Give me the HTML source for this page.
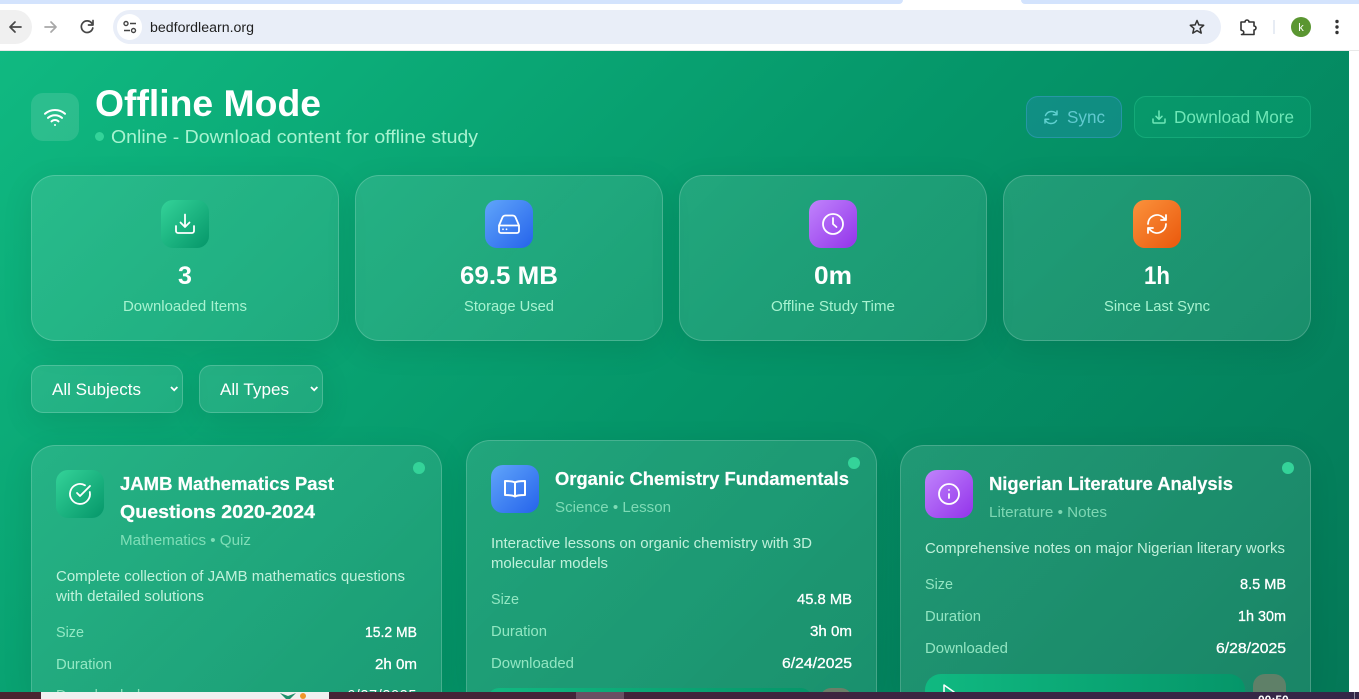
<!DOCTYPE html>
<html lang="en"><head><meta charset="utf-8"><title>Offline Mode</title>
<style>
*{box-sizing:border-box}
html,body{margin:0;padding:0;width:1359px;height:699px;overflow:hidden;background:#fff;font-family:"Liberation Sans",sans-serif}
#root{position:relative;width:1359px;height:699px;overflow:hidden;background:#fff}
.a{position:absolute}
#bg{left:0;top:51px;width:1349px;height:641px;background:linear-gradient(135deg,#10b981 0%,#059669 50%,#047857 100%)}
.p{position:absolute;background:linear-gradient(135deg,rgba(255,255,255,.11),rgba(255,255,255,.09));border:1px solid rgba(255,255,255,.18);box-shadow:0 8px 32px rgba(0,0,0,.09)}
.s{top:175px;width:308px;height:166px;border-radius:24px}
.c{width:411px;border-radius:24px 24px 0 0;border-bottom:0}
.i{position:absolute;width:48px;height:48px;border-radius:12px}
.g{background:linear-gradient(135deg,#34d399,#059669)}
.b{background:linear-gradient(135deg,#60a5fa,#2563eb)}
.v{background:linear-gradient(135deg,#c084fc,#9333ea)}
.o{background:linear-gradient(135deg,#fb923c,#ea580c)}
svg{position:absolute;left:0;top:0}
text{font-family:"Liberation Sans",sans-serif}
.ti{font-size:18.500px;font-weight:700;fill:#fff;stroke:#fff;stroke-width:.2px}
.su{font-size:14.500px;fill:#a7f3d0;fill-opacity:.7}
.de{font-size:14.500px;fill:#d1fae5;fill-opacity:.9}
.k{font-size:14.500px;fill:#a7f3d0;fill-opacity:.85}
.m{font-size:14.500px;fill:#fff;stroke:#fff;stroke-width:.3px;text-anchor:end}
.n{font-size:25px;font-weight:700;fill:#fff;text-anchor:middle}
.l{font-size:14.500px;fill:#a7f3d0;text-anchor:middle}
.w{fill:none;stroke:#fff;stroke-width:1.800;stroke-linecap:round;stroke-linejoin:round}
.t{fill:none;stroke:#474747;stroke-width:1.700;stroke-linecap:round;stroke-linejoin:round}
.clip{position:absolute;overflow:hidden;white-space:nowrap}
</style></head><body>
<div id="root">
<div class="a" style="left:0;top:0;width:1359px;height:51px;background:#fff"></div>
<div class="a" style="left:0;top:0;width:903px;height:4px;background:#d3e3fd;border-radius:0 0 8px 0"></div>
<div class="a" style="left:1021px;top:0;width:338px;height:4px;background:#d3e3fd;border-radius:0 0 0 8px"></div>
<div class="a" style="left:113px;top:10px;width:1108px;height:34px;border-radius:17px;background:#e9eef8"></div>
<div class="a" style="left:117px;top:14px;width:25px;height:26px;border-radius:13px;background:#fff"></div>
<div class="a" style="left:0;top:10px;width:32px;height:34px;border-radius:0 17px 17px 0;background:#f0f0f0"></div>
<div class="a" style="left:0;top:50px;width:1359px;height:1px;background:#e8e8e8"></div>
<div class="a" id="bg"></div>

<div class="a" style="left:31px;top:93px;width:48px;height:48px;border-radius:12px;background:rgba(255,255,255,.12)"></div>
<div class="a" style="left:1026px;top:96px;width:96px;height:42px;border-radius:12px;background:rgba(59,130,246,.2);border:1px solid rgba(96,165,250,.3)"></div>
<div class="a" style="left:1134px;top:96px;width:177px;height:42px;border-radius:12px;background:rgba(16,185,129,.2);border:1px solid rgba(52,211,153,.3)"></div>

<div class="p s" style="left:31px"></div><div class="p s" style="left:355px"></div><div class="p s" style="left:679px"></div><div class="p s" style="left:1003px"></div>
<div class="i g" style="left:161px;top:200px"></div><div class="i b" style="left:485px;top:200px"></div><div class="i v" style="left:809px;top:200px"></div><div class="i o" style="left:1133px;top:200px"></div>

<div class="p" style="left:31px;top:365px;width:152px;height:48px;border-radius:12px"></div>
<div class="p" style="left:199px;top:365px;width:124px;height:48px;border-radius:12px"></div>

<div class="p c" style="left:31px;top:445px;height:247px"></div>
<div class="p c" style="left:466px;top:440px;height:252px"></div>
<div class="p c" style="left:900px;top:445px;height:247px"></div>
<div class="i g" style="left:56px;top:470px"></div><div class="i b" style="left:491px;top:465px"></div><div class="i v" style="left:925px;top:470px"></div>
<div class="a" style="left:413px;top:462px;width:12px;height:12px;border-radius:6px;background:#34d399"></div>
<div class="a" style="left:848px;top:457px;width:12px;height:12px;border-radius:6px;background:#34d399"></div>
<div class="a" style="left:1282px;top:462px;width:12px;height:12px;border-radius:6px;background:#34d399"></div>
<div class="a" style="left:488px;top:688px;width:324px;height:11px;border-radius:16px 16px 0 0;background:linear-gradient(90deg,#10b981,#059669)"></div>
<div class="a" style="left:820px;top:688px;width:32px;height:11px;border-radius:12px 12px 0 0;background:#6b7e68"></div>
<div class="a" style="left:925px;top:674px;width:320px;height:25px;border-radius:16px 16px 0 0;background:linear-gradient(90deg,#10b981,#059669)"></div>
<div class="a" style="left:1253px;top:674px;width:33px;height:25px;border-radius:12px 12px 0 0;background:#5f8068"></div>
<div class="a" style="left:95px;top:132px;width:9px;height:9px;border-radius:5px;background:#34d399"></div>

<div class="clip" style="left:56px;top:688px;width:90px;height:4px;font-size:14.500px;line-height:17px;letter-spacing:.4px;color:#8fe3bd">Downloaded</div>
<div class="clip" style="left:337px;top:688px;width:80px;height:4px;font-size:14.500px;line-height:17px;letter-spacing:.6px;color:#fff;text-align:right">6/27/2025</div>

<svg width="1359" height="699" viewBox="0 0 1359 699">
<!-- browser chrome -->
<path class="t" d="M21 27H10M15 22l-5 5 5 5"/>
<path class="t" style="stroke:#a8a8a8" d="M45 27h11M51 22l5 5-5 5"/>
<path class="t" d="M92 23.500a5.800 5.800 0 1 0 .8 4.500M93 20.500V25h-4.500"/>
<circle cx="126" cy="23.500" r="2" fill="none" stroke="#444" stroke-width="1.400"/><path d="M130 23.500h6M124 30.500h6" stroke="#444" stroke-width="1.500"/><circle cx="133.500" cy="30.500" r="2" fill="none" stroke="#444" stroke-width="1.400"/>
<text x="150" y="32" font-size="13.500" fill="#1f1f1f" textLength="104" lengthAdjust="spacingAndGlyphs">bedfordlearn.org</text>
<path fill="none" stroke="#333" stroke-width="1.500" stroke-linejoin="round" d="M1197 20.500l1.900 4.400 4.800.4-3.600 3.100 1.100 4.700-4.200-2.500-4.200 2.500 1.100-4.700-3.600-3.100 4.800-.4z"/>
<path fill="none" stroke="#333" stroke-width="1.600" stroke-linejoin="round" d="M1241 22h4a2 2 0 0 1 4 0h5v4a2 2 0 0 1 0 4v4.500h-12.500a2 2 0 0 0 .5-4 2.500 2.500 0 0 0-1-.5z"/>
<rect x="1273.500" y="20" width="1" height="14" fill="#cfd8ea"/>
<circle cx="1301" cy="27" r="10" fill="#5a9631"/><text x="1301" y="31" font-size="11" fill="#fff" text-anchor="middle">k</text>
<circle cx="1337" cy="21.500" r="1.700" fill="#333"/><circle cx="1337" cy="27" r="1.700" fill="#333"/><circle cx="1337" cy="32.500" r="1.700" fill="#333"/>

<!-- header -->
<g transform="translate(43 105)" class="w" style="stroke-width:2"><path d="M2 8.800a15 15 0 0 1 20 0M5 12.900a10.500 10.500 0 0 1 14 0M8.500 16.400a5 5 0 0 1 7 0M12 20h.01"/></g>
<text x="95" y="116" font-size="37" font-weight="700" fill="#fff" textLength="226" lengthAdjust="spacingAndGlyphs">Offline Mode</text>
<text x="111" y="143" font-size="18.500" fill="#a7f3d0" textLength="367" lengthAdjust="spacingAndGlyphs">Online - Download content for offline study</text>
<g transform="translate(1043 109)" fill="none" stroke="#5fd0d0" stroke-width="1.500" stroke-linecap="round" stroke-linejoin="round"><path d="M14 5.500A6.500 6.500 0 0 0 2.500 6.500M2 10.500a6.500 6.500 0 0 0 11.500 1M14 2v3.700h-3.700M2 14v-3.700h3.700"/></g>
<text x="1067" y="123" font-size="17.500" fill="#60c9cf" textLength="38" lengthAdjust="spacingAndGlyphs">Sync</text>
<g transform="translate(1151 109)" fill="none" stroke="#6ee7b7" stroke-width="1.500" stroke-linecap="round" stroke-linejoin="round"><path d="M2 10v3a1 1 0 0 0 1 1h10a1 1 0 0 0 1-1v-3M8 2v8M5 7.300l3 3 3-3"/></g>
<text x="1174" y="123" font-size="17.500" fill="#6ee7b7" textLength="120" lengthAdjust="spacingAndGlyphs">Download More</text>

<!-- stat icons -->
<g transform="translate(173 212)" class="w"><path d="M3 14v5a2 2 0 0 0 2 2h14a2 2 0 0 0 2-2v-5M12 2.500V15M7.500 10.500 12 15l4.500-4.500"/></g>
<g transform="translate(497 212)" class="w"><path d="M2 13.500h20M2 13.500V19a2 2 0 0 0 2 2h16a2 2 0 0 0 2-2v-5.500M2 13.500 5.200 6a3.500 3.500 0 0 1 3.200-2.500h7.200A3.500 3.500 0 0 1 18.800 6L22 13.500M6 17.300h.01M9.500 17.300h.01"/></g>
<g transform="translate(821 212)" class="w"><circle cx="12" cy="12" r="10"/><path d="M12 6v6l3.500 3"/></g>
<g transform="translate(1145 212)" class="w"><path d="M3 12a9 9 0 0 1 15-6.700L21 8M21 3v5h-5M21 12a9 9 0 0 1-15 6.700L3 16M8 16H3v5"/></g>
<text class="n" x="185" y="284">3</text><text class="n" x="509" y="284" textLength="98" lengthAdjust="spacingAndGlyphs">69.5 MB</text><text class="n" x="833" y="284" textLength="38" lengthAdjust="spacingAndGlyphs">0m</text><text class="n" x="1157" y="284" textLength="26" lengthAdjust="spacingAndGlyphs">1h</text>
<text class="l" x="185" y="311" textLength="124" lengthAdjust="spacingAndGlyphs">Downloaded Items</text><text class="l" x="509" y="311" textLength="90" lengthAdjust="spacingAndGlyphs">Storage Used</text><text class="l" x="833" y="311" textLength="124" lengthAdjust="spacingAndGlyphs">Offline Study Time</text><text class="l" x="1157" y="311" textLength="106" lengthAdjust="spacingAndGlyphs">Since Last Sync</text>

<!-- selects -->
<text x="52" y="395" font-size="16.500" fill="#fff" textLength="89" lengthAdjust="spacingAndGlyphs">All Subjects</text>
<text x="220" y="395" font-size="16.500" fill="#fff" textLength="69" lengthAdjust="spacingAndGlyphs">All Types</text>
<path d="M171 387l3.200 3.200 3.200-3.200M311 387l3.200 3.200 3.200-3.200" fill="none" stroke="#fff" stroke-width="1.800"/>

<!-- card 1 -->
<g transform="translate(68 482)" class="w"><path d="M21.800 10A10 10 0 1 1 17 3.300M9 11l3 3L22 4"/></g>
<text class="ti" x="120" y="490" textLength="214" lengthAdjust="spacingAndGlyphs">JAMB Mathematics Past</text>
<text class="ti" x="120" y="518" textLength="195" lengthAdjust="spacingAndGlyphs">Questions 2020-2024</text>
<text class="su" x="120" y="545" textLength="131" lengthAdjust="spacingAndGlyphs">Mathematics • Quiz</text>
<text class="de" x="56" y="581" textLength="349" lengthAdjust="spacingAndGlyphs">Complete collection of JAMB mathematics questions</text>
<text class="de" x="56" y="601" textLength="148" lengthAdjust="spacingAndGlyphs">with detailed solutions</text>
<text class="k" x="56" y="637" textLength="28" lengthAdjust="spacingAndGlyphs">Size</text><text class="m" x="417" y="637" textLength="52" lengthAdjust="spacingAndGlyphs">15.2 MB</text>
<text class="k" x="56" y="669" textLength="56" lengthAdjust="spacingAndGlyphs">Duration</text><text class="m" x="417" y="669" textLength="42" lengthAdjust="spacingAndGlyphs">2h 0m</text>

<!-- card 2 -->
<g transform="translate(503 477)" class="w" style="stroke-width:2"><path d="M12 5.500C10.500 4.500 8 4 2 4v14c6 0 8.500.5 10 1.500 1.500-1 4-1.500 10-1.500V4c-6 0-8.500.5-10 1.500zM12 5.500v14"/></g>
<text class="ti" x="555" y="485" textLength="294" lengthAdjust="spacingAndGlyphs">Organic Chemistry Fundamentals</text>
<text class="su" x="555" y="512" textLength="116" lengthAdjust="spacingAndGlyphs">Science • Lesson</text>
<text class="de" x="491" y="548" textLength="321" lengthAdjust="spacingAndGlyphs">Interactive lessons on organic chemistry with 3D</text>
<text class="de" x="491" y="568" textLength="117" lengthAdjust="spacingAndGlyphs">molecular models</text>
<text class="k" x="491" y="604" textLength="28" lengthAdjust="spacingAndGlyphs">Size</text><text class="m" x="852" y="604" textLength="55" lengthAdjust="spacingAndGlyphs">45.8 MB</text>
<text class="k" x="491" y="636" textLength="56" lengthAdjust="spacingAndGlyphs">Duration</text><text class="m" x="852" y="636" textLength="42" lengthAdjust="spacingAndGlyphs">3h 0m</text>
<text class="k" x="491" y="668" textLength="83" lengthAdjust="spacingAndGlyphs">Downloaded</text><text class="m" x="852" y="668" textLength="70" lengthAdjust="spacingAndGlyphs">6/24/2025</text>

<!-- card 3 -->
<g transform="translate(937 482)" class="w"><circle cx="12" cy="12" r="10"/><path d="M12 16v-4M12 8h.01"/></g>
<text class="ti" x="989" y="490" textLength="244" lengthAdjust="spacingAndGlyphs">Nigerian Literature Analysis</text>
<text class="su" x="989" y="517" textLength="118" lengthAdjust="spacingAndGlyphs">Literature • Notes</text>
<text class="de" x="925" y="553" textLength="360" lengthAdjust="spacingAndGlyphs">Comprehensive notes on major Nigerian literary works</text>
<text class="k" x="925" y="589" textLength="28" lengthAdjust="spacingAndGlyphs">Size</text><text class="m" x="1286" y="589" textLength="46" lengthAdjust="spacingAndGlyphs">8.5 MB</text>
<text class="k" x="925" y="621" textLength="56" lengthAdjust="spacingAndGlyphs">Duration</text><text class="m" x="1286" y="621" textLength="48" lengthAdjust="spacingAndGlyphs">1h 30m</text>
<text class="k" x="925" y="653" textLength="83" lengthAdjust="spacingAndGlyphs">Downloaded</text><text class="m" x="1286" y="653" textLength="70" lengthAdjust="spacingAndGlyphs">6/28/2025</text>
<path d="M944 685l10 7-10 6z" fill="none" stroke="#fff" stroke-width="1.500" stroke-linejoin="round"/>
</svg>

<!-- taskbar -->
<div class="a" style="left:0;top:692px;width:1359px;height:7px;background:linear-gradient(90deg,#4a2530 0%,#43243a 45%,#3a2545 75%,#352648 100%)"></div>
<div class="a" style="left:41px;top:692px;width:288px;height:7px;background:#f0f0f0"></div>
<div class="a" style="left:576px;top:692px;width:48px;height:7px;background:#6a4f63"></div>
<div class="a" style="left:1354px;top:692px;width:1px;height:7px;background:#8a8a9a"></div>
<svg width="1359" height="699" viewBox="0 0 1359 699">
<path d="M280 693l8 3 8-3-6 6h-4z" fill="#1e8f6a"/><circle cx="303" cy="696" r="3" fill="#f0962a"/>
</svg>
<div class="clip" style="left:1258px;top:692px;width:36px;height:7px;padding-top:1px;font-size:12px;line-height:14px;font-weight:700;color:#fff">00:50</div>
</div>
</body></html>
